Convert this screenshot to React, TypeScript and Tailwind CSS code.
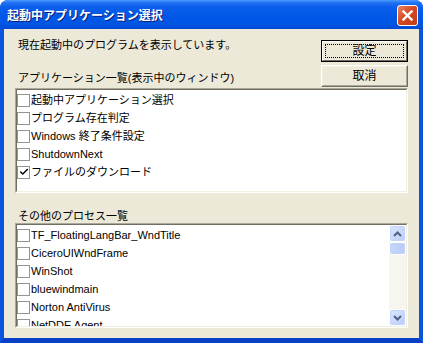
import { Check } from 'lucide-react';

const FONT = "font-['Liberation_Sans','Noto_Sans_CJK_JP',sans-serif]";

const apps = [
  { name: '起動中アプリケーション選択', checked: false },
  { name: 'プログラム存在判定', checked: false },
  { name: 'Windows 終了条件設定', checked: false },
  { name: 'ShutdownNext', checked: false },
  { name: 'ファイルのダウンロード', checked: true },
];

const processes = [
  'TF_FloatingLangBar_WndTitle',
  'CiceroUIWndFrame',
  'WinShot',
  'bluewindmain',
  'Norton AntiVirus',
  'NetDDE Agent',
];

function CheckRow({ label, checked }: { label: string; checked?: boolean }) {
  return (
    <div className="flex h-[18px] shrink-0 items-center gap-[1px] whitespace-nowrap">
      <span className="flex h-[13px] w-[13px] shrink-0 items-center justify-center border border-[#949494] bg-white">
        {checked && <Check size={10} strokeWidth={3.5} className="text-black" />}
      </span>
      <span className="text-[11px] leading-[13px] text-black">{label}</span>
    </div>
  );
}

function Sunken({ children, className }: { children: React.ReactNode; className?: string }) {
  return (
    <div className={`border border-t-[#ACA899] border-l-[#ACA899] border-b-white border-r-white ${className ?? ''}`}>
      <div className="flex h-full border border-t-[#716F64] border-l-[#716F64] border-b-[#F1EFE2] border-r-[#F1EFE2] bg-white">
        {children}
      </div>
    </div>
  );
}

function Arrow({ up }: { up?: boolean }) {
  return (
    <svg width="9" height="6" viewBox="0 0 9 6">
      <polyline
        points={up ? '1,5 4.5,1.5 8,5' : '1,1 4.5,4.5 8,1'}
        fill="none"
        stroke="#4D6185"
        strokeWidth="2"
      />
    </svg>
  );
}

function ScrollButton({ up }: { up?: boolean }) {
  return (
    <div className="flex h-[17px] w-full shrink-0 items-center justify-center rounded-[3px] border border-[#fff] bg-[linear-gradient(to_bottom_right,#DCE7FD,#B9CCF9)] shadow-[inset_0_0_0_1px_#C3D3FD]">
      <Arrow up={up} />
    </div>
  );
}

export default function App() {
  return (
    <div className={`h-[343px] w-[423px] bg-white ${FONT}`}>
      <div className="flex h-full flex-col overflow-hidden rounded-t-[8px] bg-[#0054E3]">
        <div className="flex h-[29px] shrink-0 items-center justify-between bg-[linear-gradient(to_bottom,#4A9BFF_0%,#1F70F4_10%,#0A5EEB_25%,#0058E8_55%,#0055E3_85%,#0049D4_100%)] pl-[7px] pr-[5px] pt-[2px]">
          <span className="text-[12px] font-bold leading-[14px] text-white [text-shadow:1px_1px_0_#0A1E78]">
            起動中アプリケーション選択
          </span>
          <div className="flex h-[21px] w-[21px] items-center justify-center rounded-[3px] border border-white bg-[linear-gradient(to_bottom_right,#E8876A,#D74A24_45%,#C23A14)]">
            <svg width="11" height="11" viewBox="0 0 11 11">
              <path d="M1.5 1.5 L9.5 9.5 M9.5 1.5 L1.5 9.5" stroke="white" strokeWidth="2.4" strokeLinecap="square" />
            </svg>
          </div>
        </div>

        <div className="flex flex-1 flex-col border-x-4 border-b-[5px] border-x-[#0A55E0] border-b-[#0841C8] bg-[#ECE9D8] pl-[11px] pr-[11px] pt-[11px] pb-[10px] text-black">
          <div className="flex h-[48px] shrink-0 justify-between">
            <div className="flex flex-col justify-between pb-[3px] pl-[3px]">
              <span className="-mt-[1px] text-[11px] leading-[13px]">現在起動中のプログラムを表示しています。</span>
              <span className="text-[11px] leading-[13px]">アプリケーション一覧(表示中のウィンドウ)</span>
            </div>
            <div className="flex w-[87px] flex-col gap-[3px]">
              <div className="h-[22px] border border-black">
                <div className="h-full border border-t-white border-l-white border-b-[#716F64] border-r-[#716F64] p-[2px]">
                  <div className="flex h-full items-center justify-center border border-dotted border-black text-[12px] leading-[14px]">
                    設定
                  </div>
                </div>
              </div>
              <div className="h-[22px] border border-t-white border-l-white border-b-[#716F64] border-r-[#716F64]">
                <div className="flex h-full items-center justify-center border border-t-[#F1EFE2] border-l-[#F1EFE2] border-b-[#ACA899] border-r-[#ACA899] text-[12px] leading-[14px]">
                  取消
                </div>
              </div>
            </div>
          </div>

          <Sunken className="h-[105px] shrink-0">
            <div className="flex flex-col pt-[1px]">
              {apps.map(a => (
                <CheckRow key={a.name} label={a.name} checked={a.checked} />
              ))}
            </div>
          </Sunken>

          <div className="h-[30px] shrink-0 pl-[3px] pt-[17px] text-[11px] leading-[13px]">その他のプロセス一覧</div>

          <Sunken className="h-[105px] shrink-0">
            <div className="flex flex-1 flex-col overflow-hidden pt-[1px]">
              {processes.map(p => (
                <CheckRow key={p} label={p} />
              ))}
            </div>
            <div className="flex w-[17px] shrink-0 flex-col bg-[#F6F5EE]">
              <ScrollButton up />
              <div className="h-[13px] w-full shrink-0 rounded-[3px] border border-white bg-[linear-gradient(to_right,#C8D6FB,#BACBF8)] shadow-[inset_0_0_0_1px_#BED0FA]" />
              <div className="flex-1" />
              <ScrollButton />
            </div>
          </Sunken>
        </div>
      </div>
    </div>
  );
}
